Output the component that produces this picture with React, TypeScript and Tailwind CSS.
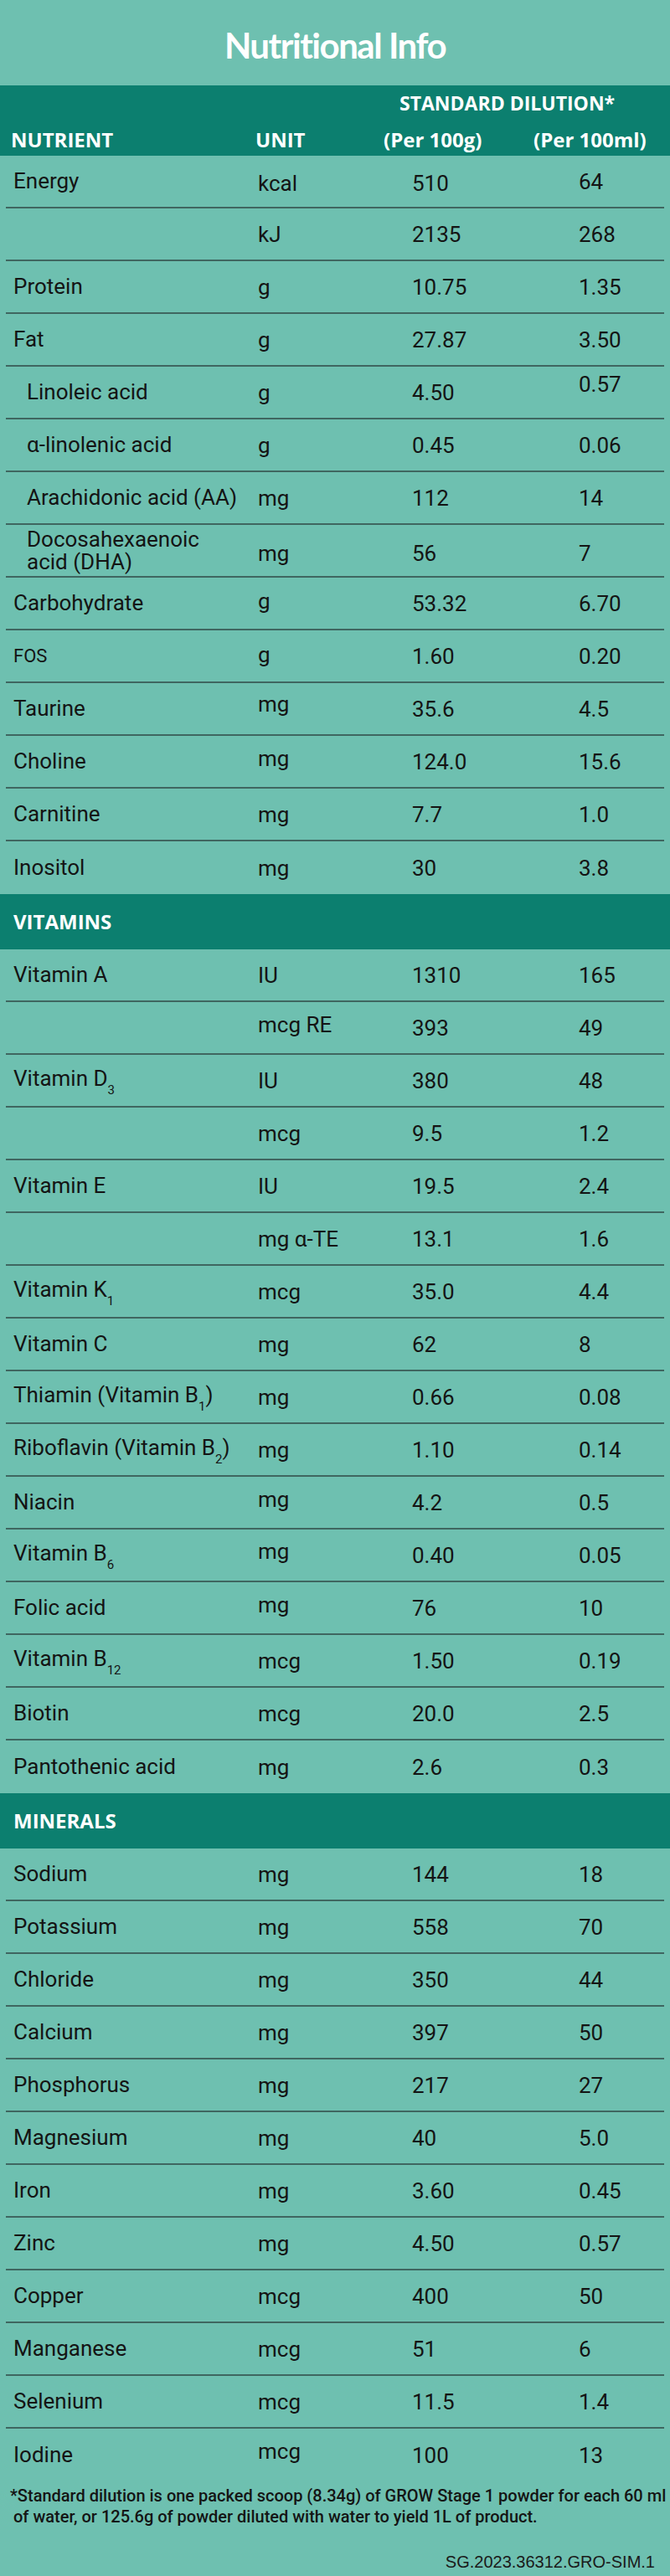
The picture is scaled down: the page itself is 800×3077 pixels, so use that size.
import type { ReactNode } from "react";

type Row = {
  label?: ReactNode;
  unit: ReactNode;
  a: string;
  b: string;
  indent?: boolean;
  small?: boolean;
  nu?: string; // nudge classes for unit
  na?: string;
  nb?: string;
};

const Sub = ({ children }: { children: ReactNode }) => (
  <sub className="text-[15px] leading-none align-[-6px]">{children}</sub>
);

const general: Row[] = [
  { label: "Energy", unit: "kcal", a: "510", b: "64", nu: "translate-y-[2px]", na: "translate-y-[2px]" },
  { unit: "kJ", a: "2135", b: "268" },
  { label: "Protein", unit: "g", a: "10.75", b: "1.35" },
  { label: "Fat", unit: "g", a: "27.87", b: "3.50" },
  { label: "Linoleic acid", indent: true, unit: "g", a: "4.50", b: "0.57", nb: "-translate-y-[10px]" },
  { label: "α-linolenic acid", indent: true, unit: "g", a: "0.45", b: "0.06" },
  { label: "Arachidonic acid (AA)", indent: true, unit: "mg", a: "112", b: "14" },
  {
    label: (
      <>
        Docosahexaenoic
        <br />
        acid (DHA)
      </>
    ),
    indent: true,
    unit: "mg",
    a: "56",
    b: "7",
    nu: "translate-y-[3px]",
    na: "translate-y-[3px]",
    nb: "translate-y-[3px]",
  },
  { label: "Carbohydrate", unit: "g", a: "53.32", b: "6.70", nu: "-translate-y-[3px]" },
  { label: "FOS", small: true, unit: "g", a: "1.60", b: "0.20", nu: "-translate-y-[2px]" },
  { label: "Taurine", unit: "mg", a: "35.6", b: "4.5", nu: "-translate-y-[6px]" },
  { label: "Choline", unit: "mg", a: "124.0", b: "15.6", nu: "-translate-y-[4px]" },
  { label: "Carnitine", unit: "mg", a: "7.7", b: "1.0" },
  { label: "Inositol", unit: "mg", a: "30", b: "3.8" },
];

const vitamins: Row[] = [
  { label: "Vitamin A", unit: "IU", a: "1310", b: "165" },
  { unit: "mcg RE", a: "393", b: "49", nu: "-translate-y-[4px]" },
  { label: <>Vitamin D<Sub>3</Sub></>, unit: "IU", a: "380", b: "48" },
  { unit: "mcg", a: "9.5", b: "1.2" },
  { label: "Vitamin E", unit: "IU", a: "19.5", b: "2.4" },
  { unit: "mg α-TE", a: "13.1", b: "1.6" },
  { label: <>Vitamin K<Sub>1</Sub></>, unit: "mcg", a: "35.0", b: "4.4" },
  { label: "Vitamin C", unit: "mg", a: "62", b: "8" },
  { label: <>Thiamin (Vitamin B<Sub>1</Sub>)</>, unit: "mg", a: "0.66", b: "0.08" },
  { label: <>Riboflavin (Vitamin B<Sub>2</Sub>)</>, unit: "mg", a: "1.10", b: "0.14" },
  { label: "Niacin", unit: "mg", a: "4.2", b: "0.5", nu: "-translate-y-[4px]" },
  { label: <>Vitamin B<Sub>6</Sub></>, unit: "mg", a: "0.40", b: "0.05", nu: "-translate-y-[5px]" },
  { label: "Folic acid", unit: "mg", a: "76", b: "10", nu: "-translate-y-[4px]" },
  { label: <>Vitamin B<Sub>12</Sub></>, unit: "mcg", a: "1.50", b: "0.19" },
  { label: "Biotin", unit: "mcg", a: "20.0", b: "2.5" },
  { label: "Pantothenic acid", unit: "mg", a: "2.6", b: "0.3" },
];

const minerals: Row[] = [
  { label: "Sodium", unit: "mg", a: "144", b: "18" },
  { label: "Potassium", unit: "mg", a: "558", b: "70" },
  { label: "Chloride", unit: "mg", a: "350", b: "44" },
  { label: "Calcium", unit: "mg", a: "397", b: "50" },
  { label: "Phosphorus", unit: "mg", a: "217", b: "27" },
  { label: "Magnesium", unit: "mg", a: "40", b: "5.0" },
  { label: "Iron", unit: "mg", a: "3.60", b: "0.45" },
  { label: "Zinc", unit: "mg", a: "4.50", b: "0.57" },
  { label: "Copper", unit: "mcg", a: "400", b: "50" },
  { label: "Manganese", unit: "mcg", a: "51", b: "6" },
  { label: "Selenium", unit: "mcg", a: "11.5", b: "1.4" },
  { label: "Iodine", unit: "mcg", a: "100", b: "13", nu: "-translate-y-[5px]" },
];

function TableRow({ row, line }: { row: Row; line: boolean }) {
  return (
    <div className="flex h-[63px] flex-col">
      <div className="flex flex-1 items-center pl-4 text-[26px] leading-[28px] text-[#141414]">
        <div
          className={`w-[292px] shrink-0 leading-[27px] ${row.indent ? "pl-4" : ""} ${
            row.small ? "text-[22px]" : ""
          }`}
        >
          {row.label}
        </div>
        <div className={`w-[184px] shrink-0 ${row.nu ?? ""}`}>{row.unit}</div>
        <div className={`w-[199px] shrink-0 ${row.na ?? ""}`}>{row.a}</div>
        <div className={row.nb ?? ""}>{row.b}</div>
      </div>
      {line && <div className="mx-[7px] h-[2px] bg-[#3f6660]" />}
    </div>
  );
}

function Section({ title, rows }: { title?: string; rows: Row[] }) {
  return (
    <div>
      {title && (
        <div className="flex h-[66px] items-center bg-[#0c7f6f] pl-4 font-['Open_Sans',sans-serif] text-[24px] font-bold leading-[28px] text-white">
          {title}
        </div>
      )}
      {rows.map((r, i) => (
        <TableRow key={i} row={r} line={i < rows.length - 1} />
      ))}
    </div>
  );
}

export default function App() {
  return (
    <div className="w-[800px] bg-[#6ec0b0] font-['Roboto',sans-serif]">
      {/* Title */}
      <div className="h-[102px] pt-[33px] text-center font-['Lato',sans-serif] text-[42px] font-bold leading-[42px] tracking-[-0.035em] text-white">
        Nutritional Info
      </div>

      {/* Column header */}
      <div className="h-[84px] bg-[#0c7f6f] pt-[7px] font-['Open_Sans',sans-serif] font-bold text-white">
        <div className="pl-[477px] text-[23px] leading-[28px]">STANDARD DILUTION*</div>
        <div className="mt-[16px] flex text-[24px] leading-[28px]">
          <div className="w-[305px] pl-[13px]">NUTRIENT</div>
          <div className="w-[153px]">UNIT</div>
          <div className="w-[179px]">(Per 100g)</div>
          <div>(Per 100ml)</div>
        </div>
      </div>

      <Section rows={general} />
      <Section title="VITAMINS" rows={vitamins} />
      <Section title="MINERALS" rows={minerals} />

      {/* Footnote */}
      <div className="pt-[5px] pb-[7px] text-[20px] font-medium leading-[25px] text-[#141414]">
        <div className="whitespace-nowrap pl-[12px]">
          *Standard dilution is one packed scoop (8.34g) of GROW Stage 1 powder for each 60 ml
        </div>
        <div className="whitespace-nowrap pl-[16px]">
          of water, or 125.6g of powder diluted with water to yield 1L of product.
        </div>
        <div className="mt-[31px] pr-[18px] text-right font-['Liberation_Sans',sans-serif] text-[20px] font-normal leading-[20px] text-[#1a1a1a]">
          SG.2023.36312.GRO-SIM.1
        </div>
      </div>
    </div>
  );
}
